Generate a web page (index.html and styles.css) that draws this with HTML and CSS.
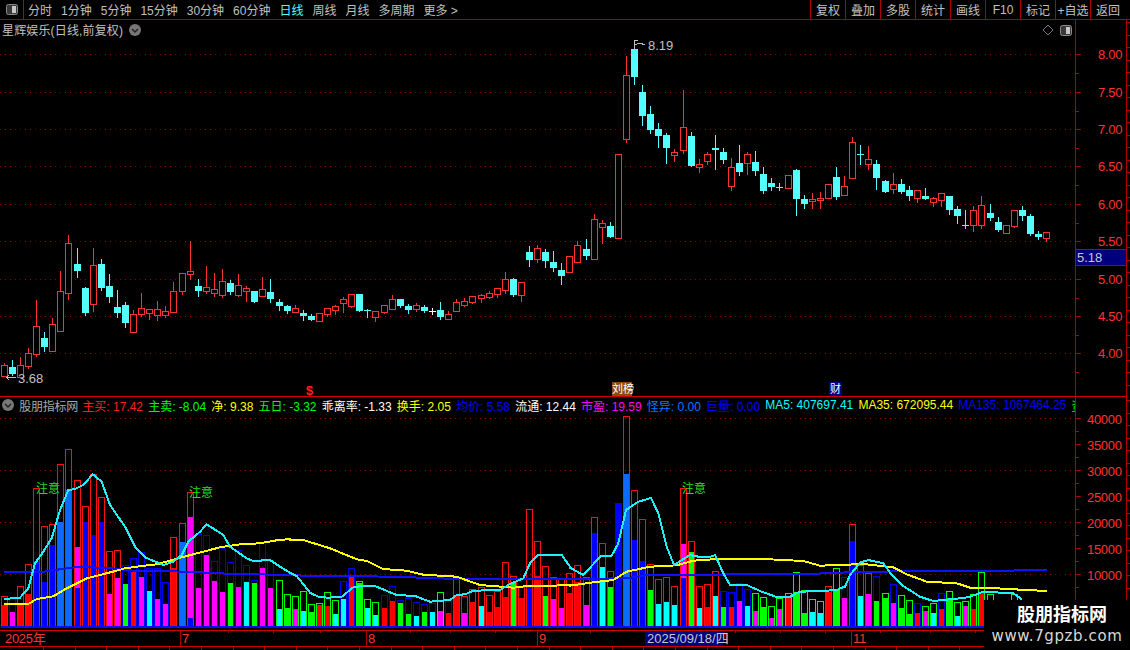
FILE: index.html
```html
<!DOCTYPE html>
<html lang="zh">
<head>
<meta charset="utf-8">
<title>星辉娱乐 日线</title>
<link rel="stylesheet" href="styles.css">
</head>
<body>
<div class="app">
  <nav class="toolbar">
    <div class="toggle">
      <svg class="toggle-icon" viewBox="0 0 12 11"><rect x="0.5" y="0.5" width="11" height="10" rx="2" class="toggle-frame"/><rect x="6" y="2" width="4" height="7" class="toggle-fill"/></svg>
    </div>
    <div class="periods">
      <span>分时</span><span>1分钟</span><span>5分钟</span><span>15分钟</span><span>30分钟</span><span>60分钟</span><span class="active">日线</span><span>周线</span><span>月线</span><span>多周期</span><span>更多 &gt;</span>
    </div>
    <div class="tools">
      <span>复权</span><span>叠加</span><span>多股</span><span>统计</span><span>画线</span><span>F10</span><span>标记</span><span>+自选</span><span>返回</span>
    </div>
  </nav>

  <section class="pane price-pane">
    <div class="pane-title">
      <span>星辉娱乐(日线,前复权)</span>
      <svg class="chev" viewBox="0 0 12 12"><circle cx="6" cy="6" r="6" class="chev-bg"/><path d="M3 5l3 3 3-3" class="chev-mark"/></svg>
    </div>
    <div class="pane-tools">
      <svg class="diamond" viewBox="0 0 12 12"><path d="M6 1l5 5-5 5-5-5z" class="diamond-mark"/></svg>
      <svg class="toggle-icon" viewBox="0 0 12 11"><rect x="0.5" y="0.5" width="11" height="10" rx="2" class="toggle-frame"/><rect x="6" y="2" width="4" height="7" class="toggle-fill"/></svg>
    </div>
    <svg id="price" class="plot"></svg>
  </section>

  <section class="pane volume-pane">
    <div class="legend">
      <svg class="chev" viewBox="0 0 12 12"><circle cx="6" cy="6" r="6" class="chev-bg"/><path d="M3 5l3 3 3-3" class="chev-mark"/></svg>
      <span class="name">股朋指标网</span>
      <span class="red">主买: 17.42</span>
      <span class="green">主卖: -8.04</span>
      <span class="yellow">净: 9.38</span>
      <span class="green">五日: -3.32</span>
      <span class="white">乖离率: -1.33</span>
      <span class="yellow">换手: 2.05</span>
      <span class="blue">均价: 5.58</span>
      <span class="white">流通: 12.44</span>
      <span class="magenta">市盈: 19.59</span>
      <span class="azure">怪异: 0.00</span>
      <span class="blue">巨量: 0.00</span>
      <span class="cyan">MA5: 407697.41</span>
      <span class="yellow">MA35: 672095.44</span>
      <span class="blue">MA135: 1067464.25</span>
      <span class="green">资</span>
    </div>
    <svg id="volume" class="plot"></svg>
  </section>

  <section class="time-pane">
    <svg id="time" class="plot"></svg>
  </section>

  <aside class="watermark">
    <div class="wm-title">股朋指标网</div>
    <div class="wm-url">www.7gpzb.com</div>
  </aside>
</div>
<script src="script.js"></script>
</body>
</html>
```

FILE: styles.css
```css
* { box-sizing: border-box; }
html, body { margin: 0; padding: 0; background: #000; }
body { width: 1130px; height: 650px; overflow: hidden; }
.app {
  position: relative;
  width: 1130px;
  height: 650px;
  display: flex;
  flex-direction: column;
  background: #000;
  color: #c0c0c0;
  font-family: "Liberation Sans", "Noto Sans CJK SC", sans-serif;
  font-size: 12px;
  overflow: hidden;
}

/* toolbar */
.toolbar {
  flex: 0 0 20px;
  display: flex;
  align-items: stretch;
  border-bottom: 1px solid #b00000;
}
.toggle {
  width: 24px;
  display: flex;
  align-items: center;
  justify-content: center;
  border-right: 1px solid #c00000;
}
.toggle-icon { width: 12px; height: 11px; display: block; }
.toggle-frame { fill: #3a3a3a; stroke: #8a8a8a; stroke-width: 1; }
.toggle-fill { fill: #c8c8c8; }
.periods {
  display: flex;
  align-items: center;
  gap: 9px;
  padding-left: 4px;
  white-space: nowrap;
}
.periods .active { color: #54ffff; }
.tools {
  margin-left: auto;
  display: flex;
  padding-right: 5px;
}
.tools span {
  width: 35px;
  display: flex;
  align-items: center;
  justify-content: center;
  border-left: 1px solid #b00000;
  white-space: nowrap;
}

/* panes */
.pane { position: relative; flex: none; }
.price-pane { height: 377px; }
.volume-pane { height: 233px; }
.time-pane { flex: 0 0 20px; }
.plot { display: block; width: 1130px; height: 100%; }

.pane-title {
  position: absolute;
  left: 2px;
  top: 2px;
  display: flex;
  align-items: center;
  gap: 6px;
  height: 15px;
  white-space: nowrap;
  letter-spacing: 0.15px;
}
.chev { width: 12px; height: 12px; flex: none; display: block; }
.chev-bg { fill: #777; }
.chev-mark { fill: none; stroke: #222; stroke-width: 1.5; }
.pane-tools {
  position: absolute;
  left: 1042px;
  top: 4px;
  display: flex;
  align-items: center;
  gap: 6px;
}
.diamond { width: 12px; height: 12px; display: block; }
.diamond-mark { fill: none; stroke: #777; stroke-width: 1; }

.legend {
  position: absolute;
  left: 2px;
  top: 0;
  width: 1073px;
  height: 16px;
  display: flex;
  align-items: center;
  gap: 5.15px;
  white-space: nowrap;
  overflow: hidden;
}
.legend .name { color: #a8a8a8; margin-right: -1px; letter-spacing: -0.2px; }
.red { color: #ff2020; }
.green { color: #00ff00; }
.yellow { color: #ffff00; }
.white { color: #ffffff; }
.blue { color: #0000ff; }
.magenta { color: #ff00ff; }
.azure { color: #0a78ff; }
.cyan { color: #00ffff; }

/* chart shapes */
.crisp { shape-rendering: crispEdges; }
.axis { stroke: #b00000; stroke-width: 1; fill: none; }
.sep { stroke: #d00000; stroke-width: 1; }
.dot { stroke: #8c0000; stroke-width: 1; stroke-dasharray: 1 4; }
.up-wick { fill: #ff3232; }
.up-body { fill: #000; stroke: #ff3232; stroke-width: 1; }
.down { fill: #54ffff; }
.flat { fill: #ffffff; }
.tick-label { fill: #ff3232; font-size: 13px; letter-spacing: -0.3px; }
.note { fill: #c0c0c0; font-size: 13px; }
.note-line { fill: none; stroke: #c0c0c0; stroke-width: 1; }
.zhuyi { fill: #20e020; font-size: 12px; }
.mark-s { fill: #ff2020; font-size: 13px; font-weight: 700; }
.mark-text { fill: #ffffff; font-size: 11px; }
.mark-brown { fill: #8a4a10; }
.mark-navy { fill: #000080; }
.price-box { fill: #00007f; stroke: #b00000; stroke-width: 1; }
.date-box { fill: #00007f; }
.box-text { fill: #c8c8c8; font-size: 13px; }
.bo-r { fill: none; stroke: #ff1010; stroke-width: 1; }
.bo-g { fill: none; stroke: #00ff00; stroke-width: 1; }
.bo-b { fill: none; stroke: #0000ee; stroke-width: 1; }
.bf-r { fill: #ff0000; }
.bf-g { fill: #00ff00; }
.bf-b { fill: #0000ff; }
.bf-l { fill: #0a6cff; }
.bf-m { fill: #ff00ff; }
.bf-c { fill: #00ffff; }
.ln { fill: none; stroke-width: 2; }
.ln-blue { stroke: #1010ff; }
.ln-yellow { stroke: #ffff00; }
.ln-cyan { stroke: #20f0f8; }
.base { fill: #0808ff; }

/* watermark */
.watermark {
  position: absolute;
  left: 984px;
  top: 600px;
  width: 146px;
  height: 50px;
  background: #000;
  display: flex;
  flex-direction: column;
  align-items: center;
  justify-content: center;
  gap: 1px;
}
.wm-title { color: #fff; font-size: 18px; font-weight: 700; line-height: 24px; margin-left: 10px; margin-top: -2px; }
.wm-url { color: #d8d8d8; font-family: "DejaVu Sans", sans-serif; font-size: 15px; line-height: 17px; letter-spacing: 0.6px; }
```

FILE: script.js
```js
var NS = "http://www.w3.org/2000/svg";
function px(i) { return Math.floor(4.3 + i * 8.08); }
function setView(id, y, h) { document.getElementById(id).setAttribute("viewBox", "0 " + y + " 1130 " + h); }

// candles: colour, wick top, body top, body bottom, wick bottom (3x crop units)
var candleGroups = [
  { off: 230, start: 0, d: [
    "R400,406,437,437","C390,411,432,435","R381,406,440,440","R354,370,407,414","R210,289,371,377","C306,324,351,363",
    "R264,283,362,362","R123,184,302,302","R15,40,188,207","C54,102,123,141","C171,174,249,255","R54,106,221,243",
    "C87,102,174,180","C132,168,201,216","C180,231,249,261","C216,225,279,291","R240,253,305,305","R189,235,251,259",
    "R238,238,248,267","R213,238,255,270","R228,244,255,260","R156,184,245,245","R130,130,182,191","R33,124,131,148",
    "C148,168,183,198","R108,172,182,189","R129,178,188,198","R117,154,194,201","C150,159,186,192","R132,166,194,198",
    "R168,175,182,213","C183,183,216,216","R141,178,197,197","C147,186,207,216","C207,216,228,240","C225,228,243,249",
    "R225,235,245,245","C240,249,258,270","C252,258,270,270","R249,250,272,272","R234,235,251,258","R225,229,239,252",
    "R201,208,218,246","R192,193,227,231","C192,192,243,243","C237,240,242,261","R244,244,260,273","R225,226,245,249",
    "R195,208,236,236","C207,207,228,231","C222,228,240,249","R219,226,237,243","C225,231,243,246","W234,242,243,252",
    "C216,240,261,267","R243,253,266,266","R207,217,242,242","R204,214,224,228","R198,199,215,219","R192,195,203,216",
    "R183,190,200,204","R174,175,191,201","R126,148,179,189","C144,148,195,198","R156,157,194,213","C48,67,90,108",
    "R45,55,87,96","C57,67,93,111","C63,97,114,123","C100,121,138,162"
  ]},
  { off: 30, start: 70, d: [
    "R678,678,726,726","R634,646,696,696","C628,657,678,687","R552,568,686,686","R570,580,590,639","C576,588,621,621",
    "R373,373,623,623","R78,136,326,336","C30,57,140,162","C165,186,258,285","C228,252,300,309","C279,297,318,351",
    "C309,315,354,399","R357,366,374,393","R180,292,359,369","C306,318,408,408","R387,402,411,426","R366,373,392,402",
    "C315,354,360,417","C354,366,390,399","R384,411,467,480","C345,399,426,435","R366,373,399,432","C363,396,423,435",
    "C411,432,483,489","C444,459,471,480","C459,471,474,480","R435,435,473,473","C417,420,507,555","C495,507,522,534",
    "R489,507,512,534","R486,503,510,534","R462,462,503,503","C411,441,501,507"
  ]},
  { off: 120, start: 104, d: [
    "R168,198,224,224","R51,67,173,173","C75,101,104,132","R78,118,131,147","C120,132,174,207","C180,183,216,216",
    "R159,192,206,219","C177,192,216,219","C198,210,228,240","R211,211,233,246","C204,228,237,237","R231,235,245,258",
    "R219,220,239,258","C228,228,270,282","C258,267,288,309","C270,315,318,324","R258,271,314,333","R228,256,316,324",
    "C252,279,294,300","C291,306,330,333","R316,316,339,339","R270,271,317,321","C258,270,288,300","C282,288,342,345",
    "C333,342,351,357","R335,335,353,363"
  ]}
];

// volume bars: outline colour + top, fill colour + top, optional lower fill colour + top
var barGroups = [
  { off: 430, start: 0, d: [
    "r499r525","b500m546","r469r525","r403r492","r175b393","r289b456","r283b345","r103l276","r58l180","r151m351b474",
    "r229b276","r133b315","r202b276","r364m492","r361m444","b406g462","b385r426","b367m441","b415c483","b413m507",
    "b457m522","r322r414","r280l336","r187m261b564","b312m474","b316m375","b394m453","b354m486","b397g459","b360m471",
    "b406c456","b450g459","b339m414","b390m474","g451c537","g493g534"
  ]},
  { off: 480, start: 36, d: [
    "g349m387","g334c393","g373g396","g370r375","g337r378","g361c402","b304c357","b265r291","g304g310","g358c384",
    "g367c405","b346r384","b319r363","b361g369","b355g402","b367c408","b373g396","b370c396","g337m393","b361r399",
    "r298r348","r347m399","r328r366","r322c378","r346r396","r333r381","r247r351","r289g307","r322r354","r88b318",
    "r184r289","r259g348","r292m357","r295m384","r280r339"
  ]},
  { off: 410, start: 71, d: [
    "r465r517","r502m585","r322b369","r400c471","r484g531","b280b280","r18l192","r241b390","r328b453","r463g540",
    "r508c582","r502c576","r529c585","r235m402b504","r394g426","r529c594","r523r591","r484c558","b544g591","b547r591",
    "b520m573","b538c588","g550m603","g562g591","g589m624","g565m597","g550r562","g487g546","g541g609","g568c606",
    "g574c609","r529r546","g475g540","b500m564"
  ]},
  { off: 480, start: 105, d: [
    "r132b183","r255c348","r279m342","b288g363","g339g354","b312m369","g345g384","g361g402","b369r399","g378m393",
    "g369c399","b339r387","g333g354","g366c408","g363m378","g342r387","g276r339","g342g400","g400g400","g400g400","g342g400"
  ]}
];

var lines = {
  blue: [
    [0, 430, [12,427,130,425,180,418,230,411,330,414,400,422,560,425,620,428,720,433,870,434]],
    [290, 480, [0,285,60,288,240,289,400,293,500,297,840,296]],
    [570, 410, [0,507,170,505,230,495,560,493,800,490]],
    [840, 480, [0,278,60,275,500,272,620,269]]
  ],
  yellow: [
    [0, 430, [12,522,85,522,110,507,160,499,200,475,260,445,350,422,375,415,425,408,470,403,560,378,660,352,720,343,780,340,840,329,870,328]],
    [290, 480, [0,180,40,180,120,205,200,238,230,243,280,267,350,272,400,284,500,290,570,315,670,323,710,318,840,316]],
    [570, 410, [0,527,60,518,130,510,170,485,240,470,320,466,370,452,440,447,580,447,700,453,750,467,800,465]],
    [840, 480, [0,255,70,252,160,262,200,283,260,305,350,310,390,323,470,325,520,328,620,333]]
  ],
  cyan: [
    [0, 430, [12,507,60,503,85,475,105,400,130,365,155,325,180,240,205,180,225,177,250,165,278,133,305,155,330,225,375,290,405,350,435,382,490,405,520,395,545,375,565,335,600,305,620,283,670,315,690,350,740,385,760,393,810,390,840,410,870,428]],
    [290, 480, [0,278,20,288,60,338,85,350,115,353,155,350,190,322,215,318,255,318,320,345,375,348,420,365,480,360,500,345,525,343,550,332,630,330,660,312,700,295,720,250,745,225,815,225,840,260]],
    [570, 410, [0,473,40,495,75,457,95,437,125,437,145,400,168,300,205,275,243,264,265,310,290,410,312,465,360,435,390,441,420,441,435,435,460,490,480,525,530,525,575,545,620,561,660,561,680,548,720,543,800,541]],
    [840, 480, [0,325,15,320,30,285,60,248,85,240,130,250,155,285,190,318,240,350,280,363,340,357,385,352,430,335,520,340,545,358]]
  ]
};

function rect(x, y, w, h, cls) {
  return '<rect class="crisp ' + cls + '" x="' + x + '" y="' + y + '" width="' + w + '" height="' + h + '"/>';
}
function line(x1, y1, x2, y2, cls) {
  return '<line class="crisp ' + cls + '" x1="' + x1 + '" y1="' + y1 + '" x2="' + x2 + '" y2="' + y2 + '"/>';
}
function text(x, y, s, cls) {
  return '<text class="' + cls + '" x="' + x + '" y="' + y + '">' + s + '</text>';
}

function axes(y1, y2) {
  return line(1075.5, y1, 1075.5, y2, "axis") + line(1126.5, y1, 1126.5, y2, "axis");
}
function rightTicks(y1, y2) {
  var s = "";
  for (var y = y1; y < y2; y += 12.5) s += line(1127, Math.round(y) + 0.5, 1130, Math.round(y) + 0.5, "axis");
  return s;
}

function drawPrice() {
  var s = "", i, y;
  var labels = [["8.00",54],["7.50",92],["7.00",129],["6.50",166],["6.00",204],["5.50",241],["5.00",279],["4.50",316],["4.00",353]];
  labels.forEach(function (l) {
    y = l[1] + 0.5;
    s += line(0, y, 1075, y, "dot") + line(1076, y, 1081, y, "axis");
    s += line(1076, y + 18.5, 1079, y + 18.5, "axis");
    s += text(1098, l[1] + 5, l[0], "tick-label");
  });
  s += axes(20, 396) + rightTicks(22, 396);

  candleGroups.forEach(function (g) {
    g.d.forEach(function (c, n) {
      var kind = c[0], v = c.slice(1).split(",").map(function (a) { return Math.round(g.off + a / 3); });
      var x = px(g.start + n);
      if (kind === "R") {
        s += rect(x, v[0], 1, v[3] - v[0] + 1, "up-wick");
        s += '<rect class="crisp up-body" x="' + (x - 2.5) + '" y="' + (v[1] + 0.5) + '" width="6" height="' + Math.max(v[2] - v[1], 1) + '"/>';
      } else {
        var cls = kind === "W" ? "flat" : "down";
        s += rect(x, v[0], 1, v[3] - v[0] + 1, cls);
        s += rect(x - 3, v[1], 7, Math.max(v[2] - v[1], 1), cls);
      }
    });
  });

  // extreme price notes
  s += '<path class="crisp note-line" d="M16 377.5H6M6 377.5l3-2M6 377.5l3 2"/>';
  s += text(18, 383, "3.68", "note");
  s += '<path class="crisp note-line" d="M634.5 49V40.5H638M635 44h2l3-1 5 2"/>';
  s += text(648, 50, "8.19", "note");

  // event marks
  s += text(306, 395, "$", "mark-s");
  s += rect(612, 382, 20, 14, "mark-brown") + text(612, 393, "刘榜", "mark-text");
  s += rect(829, 382, 13, 14, "mark-navy") + text(830, 393, "财", "mark-text");

  // current price box
  s += '<rect class="crisp price-box" x="1075.5" y="249.5" width="51" height="16"/>';
  s += text(1077, 262, "5.18", "box-text");

  s += line(0, 396.5, 1127, 396.5, "sep");
  document.getElementById("price").innerHTML = s;
  setView("price", 20, 377);
}

function drawVolume() {
  var s = "";
  [[419,"40000"],[445,"35000"],[471,"30000"],[497,"25000"],[523,"20000"],[549,"15000"],[575,"10000"]].forEach(function (l, n) {
    var y = l[0] - 0.5;
    if (n % 2 === 0) s += line(0, y, 1075, y, "dot");
    s += line(1076, y, 1081, y, "axis");
    s += line(1076, y + 13, 1079, y + 13, "axis");
    s += text(1087, l[0] + 5, l[1], "tick-label");
  });
  s += axes(397, 630) + rightTicks(400, 630);

  var base = 626;
  barGroups.forEach(function (g) {
    g.d.forEach(function (b, n) {
      var m = b.match(/([a-z])(\d+)/g), x = px(g.start + n);
      m.forEach(function (p, k) {
        var top = Math.round(g.off + p.slice(1) / 3);
        if (k > 0) s += rect(x - 2, top, 5, base - top, "bf-" + p[0]);
      });
      var t = Math.round(g.off + m[0].slice(1) / 3);
      s += '<rect class="crisp bo-' + m[0][0] + '" x="' + (x - 2.5) + '" y="' + (t + 0.5) + '" width="6" height="' + (base - t) + '"/>';
    });
  });
  s += rect(1, base, 985, 2, "base");

  ["blue", "yellow", "cyan"].forEach(function (name) {
    var pts = [];
    lines[name].forEach(function (seg) {
      for (var i = 0; i < seg[2].length; i += 2) {
        pts.push((seg[0] + seg[2][i] / 3).toFixed(1) + "," + (seg[1] + seg[2][i + 1] / 3).toFixed(1));
      }
    });
    s += '<polyline class="crisp ln ln-' + name + '" points="' + pts.join(" ") + '"/>';
  });

  s += text(36, 493, "注意", "zhuyi") + text(189, 497, "注意", "zhuyi") + text(682, 493, "注意", "zhuyi");
  document.getElementById("volume").innerHTML = s;
  setView("volume", 397, 233);
}

function drawTime() {
  var s = "";
  s += line(0, 630.5, 1127, 630.5, "sep") + line(0, 646.5, 1127, 646.5, "sep");
  [180, 366, 537, 851].forEach(function (x) { s += line(x + 0.5, 630, x + 0.5, 646, "axis"); });
  [228, 273, 320, 410, 450, 495, 590, 680, 735, 780, 825, 880, 930, 975].forEach(function (x) { s += line(x + 0.5, 631, x + 0.5, 633, "axis"); });
  for (var x = 43; x < 1000; x += 31.6) s += line(Math.round(x) + 0.5, 647, Math.round(x) + 0.5, 650, "axis");
  s += text(5, 643, "2025年", "tick-label");
  s += text(182, 643, "7", "tick-label") + text(368, 643, "8", "tick-label") + text(539, 643, "9", "tick-label") + text(853, 643, "11", "tick-label");
  s += '<rect class="crisp axis" x="723.5" y="634.5" width="3" height="8"/>';
  s += rect(645, 631, 78, 15, "date-box") + text(647, 643, "2025/09/18/四", "box-text");
  document.getElementById("time").innerHTML = s;
  setView("time", 630, 20);
}

drawPrice();
drawVolume();
drawTime();
```
